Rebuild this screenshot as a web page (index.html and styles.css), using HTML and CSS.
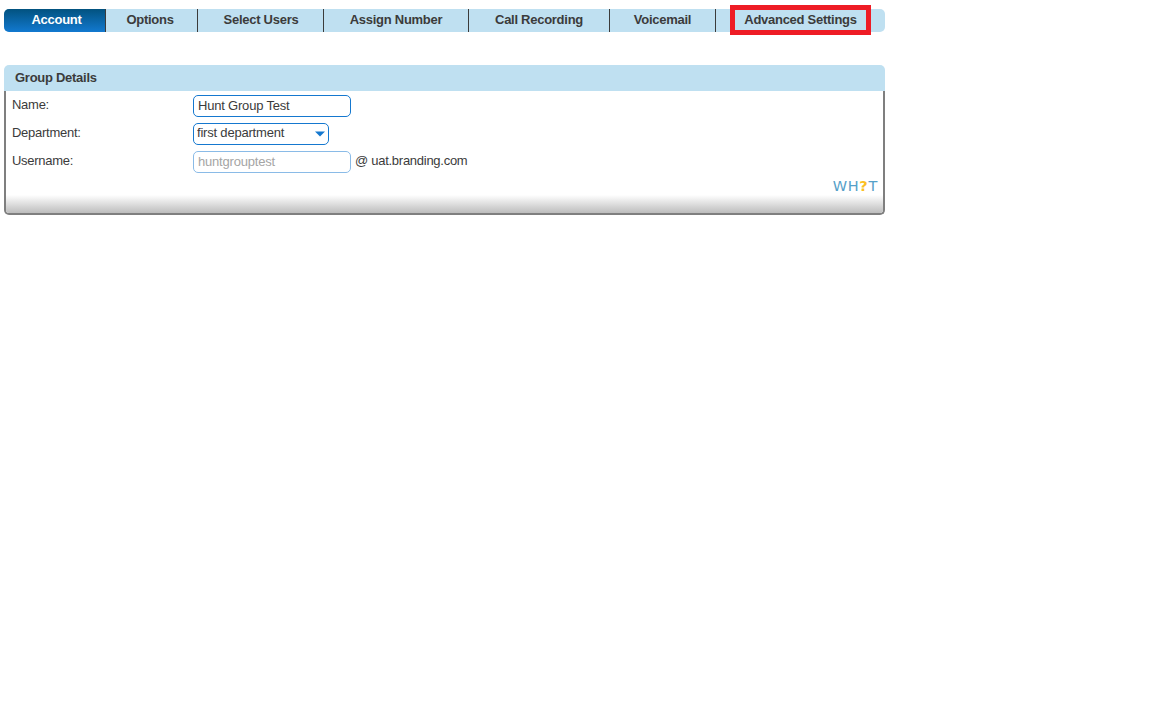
FILE: index.html
```html
<!DOCTYPE html>
<html>
<head>
    <meta charset="utf-8">
    <title>Hunt Group</title>
    <link rel="stylesheet" href="styles.css">
</head>
<body>
    <ul class="tabs">
        <li class="tab tab-account active">Account</li>
        <li class="tab tab-options">Options</li>
        <li class="tab tab-users">Select Users</li>
        <li class="tab tab-number">Assign Number</li>
        <li class="tab tab-recording">Call Recording</li>
        <li class="tab tab-voicemail">Voicemail</li>
        <li class="tab tab-advanced"><span class="highlight">Advanced Settings</span></li>
    </ul>

    <div class="panel">
        <div class="panel-header">Group Details</div>
        <div class="panel-body">
            <div class="row">
                <label class="label" for="name">Name:</label>
                <input class="field" id="name" type="text" value="Hunt Group Test">
            </div>
            <div class="row">
                <label class="label" for="department">Department:</label>
                <div class="select-wrap">
                    <select class="select" id="department">
                        <option>first department</option>
                    </select>
                    <svg class="arrow" width="10" height="6" viewBox="0 0 10 6"><path d="M0 0.5h10L5 5.5z" fill="#1578cf"/></svg>
                </div>
            </div>
            <div class="row">
                <label class="label" for="username">Username:</label>
                <input class="field" id="username" type="text" value="huntgrouptest" disabled>
                <span class="domain">@ uat.branding.com</span>
            </div>
            <div class="help">WH<span class="help-mark">?</span>T</div>
            <div class="panel-footer"></div>
        </div>
    </div>
</body>
</html>
```
FILE: styles.css
```css
body {
    margin: 0;
    padding: 9px 4px;
    font-family: Arial, "Liberation Sans", sans-serif;
    font-size: 13px;
    letter-spacing: -0.27px;
    color: #3b3b3b;
    background: #fff;
}

.tabs {
    display: flex;
    width: 881px;
    height: 23px;
    margin: 0 0 33px;
    padding: 0;
    list-style: none;
    background: #bfe0f1;
    border-radius: 5px;
}

.tab {
    box-sizing: border-box;
    border-right: 1px solid #3b3b3b;
    font-weight: bold;
    line-height: 21px;
    text-align: center;
    white-space: nowrap;
}

.tab.active {
    color: #fff;
    background: linear-gradient(#02527f, #1279d0);
    border-radius: 5px 0 0 5px;
}

.tab-account { width: 102px; padding-left: 4px; }
.tab-options { width: 92px; padding-right: 3px; }
.tab-users { width: 126px; padding-left: 1px; }
.tab-number { width: 145px; }
.tab-recording { width: 141px; }
.tab-voicemail { width: 106px; }
.tab-advanced { flex: 1; border-right: none; }

/* red frame that overhangs the tab bar */
.highlight {
    display: block;
    box-sizing: border-box;
    width: 141px;
    height: 30px;
    margin: -4px 0 0 14px;
    border: 5px solid #ee1c25;
    line-height: 19px;
}

.panel {
    width: 881px;
}

.panel-header {
    height: 26px;
    padding-left: 11px;
    font-weight: bold;
    line-height: 25px;
    background: #bfe0f1;
    border-radius: 5px 5px 0 0;
}

.panel-body {
    box-sizing: border-box;
    height: 124px;
    display: flex;
    flex-direction: column;
    border: 2px solid #7f7f7f;
    border-top: none;
    border-radius: 0 0 5px 5px;
    overflow: hidden;
}

.row {
    display: flex;
    flex-shrink: 0;
    height: 28px;
    padding-left: 6px;
}

.label {
    width: 181px;
    line-height: 27px;
}

.field,
.select {
    box-sizing: border-box;
    height: 22px;
    margin: 4px 0 0;
    border: 1px solid #1578cf;
    border-radius: 5px;
    background: #fff;
    color: #3b3b3b;
    font-family: inherit;
    font-size: 13px;
    letter-spacing: -0.2px;
}

.field {
    width: 158px;
    padding: 0 4px 2px;
}

.field:disabled {
    color: #a5a5a5;
    border-color: #8abbe7;
}

.select-wrap {
    position: relative;
}

.select {
    width: 136px;
    padding: 0 0 4px 3px;
    appearance: none;
}

.arrow {
    position: absolute;
    right: 4px;
    top: 12px;
}

.domain {
    margin-left: 4px;
    line-height: 27px;
}

.help {
    height: 20px;
    padding-right: 5px;
    font-family: "DejaVu Sans", sans-serif;
    font-size: 14.5px;
    letter-spacing: 0.7px;
    line-height: 22px;
    text-align: right;
    color: #55a0c8;
}

.help-mark {
    font-weight: bold;
    color: #fbbf24;
}

.panel-footer {
    flex: 1;
    background: linear-gradient(#fff, #bdbdbd);
}
```
